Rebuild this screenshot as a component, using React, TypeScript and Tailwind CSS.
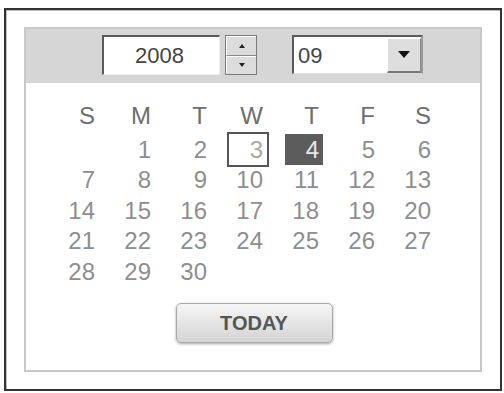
import React from 'react';

const days = ['S', 'M', 'T', 'W', 'T', 'F', 'S'];

// September 2008 starts on a Monday
const cells: (number | null)[] = [null, ...Array.from({ length: 30 }, (_, i) => i + 1)];

const font = { fontFamily: '"Liberation Sans", Arial, sans-serif' };

function Cell({ day }: { day: number | null }) {
    if (day === null) return <div className="h-[30.5px]" />;

    let box = 'text-[#8e8e8e]';
    if (day === 3) box = 'text-[#a8a8a8] outline-2 outline-[#555] -outline-offset-0 bg-white';
    if (day === 4) box = 'text-[#e8e8e8] bg-[#5c5c5c]';

    return (
        <div className="flex justify-end h-[30.5px] items-center">
            <span className={`w-[38px] h-[31px] pr-[4px] text-right leading-[31px] ${box}`}>{day}</span>
        </div>
    );
}

export default function App() {
    return (
        <div className="w-[504px] h-[393px] bg-white pt-[8px] pl-[4px]" style={font}>
            {/* outer frame */}
            <div className="w-[498px] h-[383px] border-2 border-[#333] pt-[17px] pl-[18px] shadow-[inset_1px_1px_0_#bbb]">
                {/* calendar panel */}
                <div className="w-[458px] h-[345px] border-2 border-[#c8c8c8] bg-white flex flex-col">
                    {/* header bar */}
                    <div className="h-[54px] bg-[#d6d6d6] flex items-start pt-[6px] pl-[76px]">
                        {/* year field */}
                        <div className="w-[118px] h-[40px] bg-white border-t-2 border-l-2 border-[#5a5a5a] border-r border-b border-r-[#eee] border-b-[#eee] flex items-center justify-center text-[22px] text-[#444] pr-[4px]">
                            2008
                        </div>
                        {/* spinner */}
                        <div className="ml-[5px] w-[32px] h-[40px] border border-[#7a7a7a] flex flex-col bg-[#dcdcdc]">
                            <div className="flex-1 border-b border-[#8a8a8a] border-t border-t-white border-l border-l-white flex items-center justify-center">
                                <div className="w-0 h-0 border-l-[3px] border-r-[3px] border-b-[4px] border-l-transparent border-r-transparent border-b-[#222]" />
                            </div>
                            <div className="flex-1 border-t border-t-white border-l border-l-white flex items-center justify-center">
                                <div className="w-0 h-0 border-l-[3px] border-r-[3px] border-t-[4px] border-l-transparent border-r-transparent border-t-[#222]" />
                            </div>
                        </div>
                        {/* month select */}
                        <div className="ml-[35px] w-[131px] h-[39px] bg-white border-t-2 border-l-2 border-[#5a5a5a] border-r-2 border-b border-r-[#9a9a9a] border-b-[#ddd] flex items-center">
                            <span className="pl-[4px] text-[22px] text-[#444] flex-1">09</span>
                            <div className="w-[34px] h-[35px] bg-[#dedede] border-t border-l border-white border-b-2 border-r border-b-[#777] border-r-[#888] flex items-center justify-center">
                                <div className="w-0 h-0 border-l-[6px] border-r-[6px] border-t-[7px] border-l-transparent border-r-transparent border-t-[#111]" />
                            </div>
                        </div>
                    </div>

                    {/* day grid */}
                    <div className="mt-[18px] ml-[17px] w-[392px] grid grid-cols-7 text-[24px]">
                        {days.map((d, i) => (
                            <div key={i} className="flex justify-end h-[33px] items-start">
                                <span className="w-[38px] pr-[4px] text-right leading-[30px] text-[#6e6e6e]">{d}</span>
                            </div>
                        ))}
                        {cells.map((d, i) => (
                            <Cell key={i} day={d} />
                        ))}
                    </div>

                    {/* today button */}
                    <div className="flex justify-center mt-[16px] pl-[2px]">
                        <button className="w-[157px] h-[40px] rounded-[5px] border border-[#a8a8a8] bg-gradient-to-b from-[#f6f6f6] to-[#d4d4d4] shadow-[0_1px_3px_rgba(0,0,0,0.35)] text-[20px] font-bold text-[#555]">
                            TODAY
                        </button>
                    </div>
                </div>
            </div>
        </div>
    );
}
